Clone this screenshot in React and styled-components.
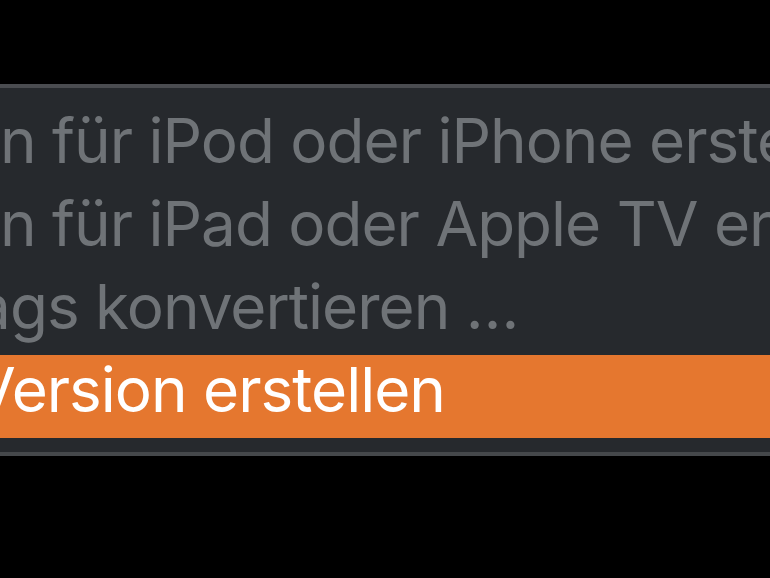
import React from "react";
import styled, { createGlobalStyle } from "styled-components";

const Global = createGlobalStyle`
  html, body {
    margin: 0;
    padding: 0;
    background: #000;
    overflow: hidden;
  }
  body {
    width: 770px;
    height: 578px;
  }
`;

const Stage = styled.div`
  width: 770px;
  height: 578px;
  overflow: hidden;
  padding-top: 84px;
  box-sizing: border-box;
`;

const Menu = styled.div`
  margin-left: -200px;
  width: 1200px;
  background: #26292d;
  border-top: 4px solid #4a4c50;
  border-bottom: 4px solid #45484b;
  padding: 18px 0 14px;
  display: flex;
  flex-direction: column;
`;

const Item = styled.div`
  height: 83px;
  display: flex;
  align-items: flex-start;
  padding-left: 22px;
  box-sizing: border-box;
  background: ${(p) => (p.$active ? "#e5772f" : "transparent")};
  color: ${(p) => (p.$active ? "#ffffff" : "#6f7377")};
  font-family: Inter, "Noto Sans", sans-serif;
  font-size: 62px;
  line-height: 83px;
  white-space: nowrap;
  letter-spacing: -1px;
`;

const Label = styled.span`
  display: block;
  transform: translateY(-7px);
`;

const items = [
  "Version für iPod oder iPhone erstellen",
  "Version für iPad oder Apple TV erstellen",
  "ID3-Tags konvertieren …",
  "AAC-Version erstellen",
];

export default function App() {
  return (
    <>
      <Global />
      <Stage>
        <Menu>
          {items.map((t, i) => (
            <Item key={t} $active={i === items.length - 1}>
              <Label>{t}</Label>
            </Item>
          ))}
        </Menu>
      </Stage>
    </>
  );
}
